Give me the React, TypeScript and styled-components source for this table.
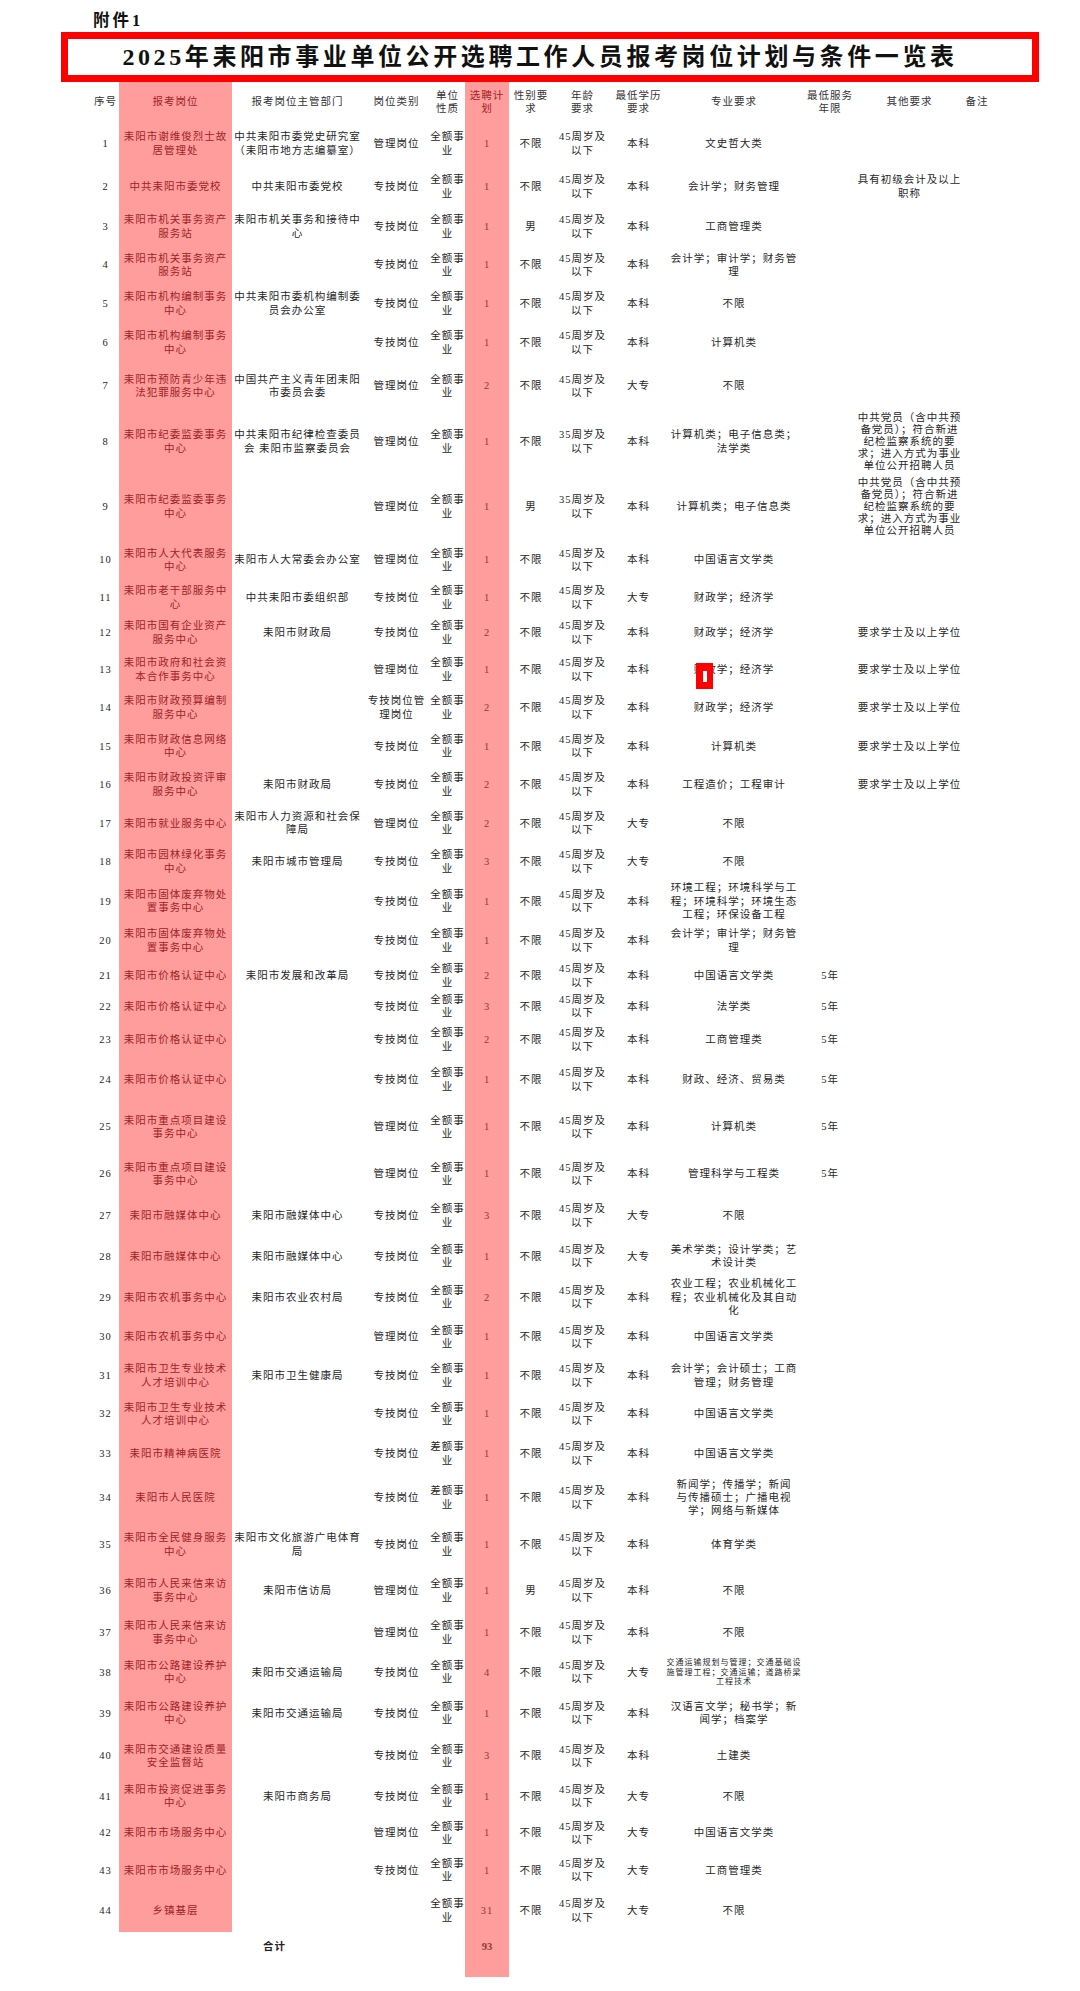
import React from "react";
import styled, { createGlobalStyle } from "styled-components";

const GlobalStyle = createGlobalStyle`
  html, body {
    margin: 0;
    padding: 0;
    background: #fff;
  }
  body {
    font-family: "Liberation Serif", "Noto Sans CJK SC", serif;
    color: #2a2a2a;
  }
`;

const COLS = "27px 113px 131px 67px 35px 44px 44px 59px 53px 138px 54px 105px 30px";

const Page = styled.div`
  width: 1080px;
  min-height: 1991px;
  background: #fff;
`;

const Attach = styled.div`
  height: 32px;
  box-sizing: border-box;
  padding: 11px 0 0 93px;
  font-size: 16.5px;
  font-weight: 700;
  line-height: 20px;
  letter-spacing: 3px;
  color: #111;
`;

const TitleBox = styled.div`
  margin-left: 61px;
  width: 978px;
  height: 50px;
  box-sizing: border-box;
  padding-right: 20px;
  border: 7px solid #ff0000;
  display: flex;
  align-items: center;
  justify-content: center;
`;

const Title = styled.h1`
  margin: 0;
  font-size: 24px;
  font-weight: 700;
  line-height: 1;
  letter-spacing: 3.6px;
  color: #111;
`;

const Table = styled.div`
  margin-left: 92px;
  width: 900px;
`;

const Row = styled.div<{ $h: number }>`
  display: grid;
  grid-template-columns: ${COLS};
  height: ${(p) => p.$h}px;
`;

const TotalRow = styled.div`
  display: grid;
  grid-template-columns: ${COLS};
  height: 45px;
  align-items: start;
`;

const Cell = styled.div<{
  $pink?: boolean;
  $num?: boolean;
  $small?: boolean;
  $head?: boolean;
  $tight?: boolean;
}>`
  position: relative;
  display: flex;
  align-items: center;
  justify-content: center;
  white-space: pre;
  text-align: center;
  font-size: ${(p) => (p.$small ? "8px" : "10.5px")};
  line-height: ${(p) => (p.$small ? "9.5px" : p.$tight ? "12px" : "13.3px")};
  letter-spacing: 1px;
  background: ${(p) => (p.$pink ? "#ff9c9c" : "transparent")};
  color: ${(p) => (p.$num ? "#8e3a3a" : p.$pink ? "#9e2426" : p.$head ? "#333" : "#262626")};
`;

const TotalLabel = styled.div`
  grid-column: 2 / 5;
  padding-top: 8px;
  text-align: center;
  font-size: 10.5px;
  line-height: 13.3px;
  letter-spacing: 1px;
  font-weight: 700;
  color: #222;
`;

const TotalCell = styled.div<{ $pink?: boolean }>`
  height: 45px;
  box-sizing: border-box;
  padding-top: 8px;
  text-align: center;
  font-size: 10.5px;
  line-height: 13.3px;
  font-weight: 700;
  color: #8e3a3a;
  background: ${(p) => (p.$pink ? "#ff9c9c" : "transparent")};
`;

const Marker = styled.span`
  position: absolute;
  left: 31px;
  top: 12px;
  width: 17px;
  height: 26px;
  background: #ff0000;
  &::after {
    content: "";
    position: absolute;
    left: 7px;
    top: 8px;
    width: 4px;
    height: 11px;
    background: #fff;
  }
`;

const Q = "全额事\n业";
const C = "差额事\n业";
const A45 = "45周岁及\n以下";
const A35 = "35周岁及\n以下";
const XS = "要求学士及以上学位";
const DJ = "中共党员（含中共预\n备党员）；符合新进\n纪检监察系统的要\n求；进入方式为事业\n单位公开招聘人员";

// post, dept, type, nature, count, gender, age, edu, major, years, other, height
type R = [string, string, string, string, string, string, string, string, string, string, string, number];

const rows: R[] = [
  ["耒阳市谢维俊烈士故\n居管理处", "中共耒阳市委党史研究室\n（耒阳市地方志编纂室）", "管理岗位", Q, "1", "不限", A45, "本科", "文史哲大类", "", "", 43.5],
  ["中共耒阳市委党校", "中共耒阳市委党校", "专技岗位", Q, "1", "不限", A45, "本科", "会计学；财务管理", "", "具有初级会计及以上\n职称", 42],
  ["耒阳市机关事务资产\n服务站", "耒阳市机关事务和接待中\n心", "专技岗位", Q, "1", "男", A45, "本科", "工商管理类", "", "", 38.5],
  ["耒阳市机关事务资产\n服务站", "", "专技岗位", Q, "1", "不限", A45, "本科", "会计学；审计学；财务管\n理", "", "", 38],
  ["耒阳市机构编制事务\n中心", "中共耒阳市委机构编制委\n员会办公室", "专技岗位", Q, "1", "不限", A45, "本科", "不限", "", "", 39],
  ["耒阳市机构编制事务\n中心", "", "专技岗位", Q, "1", "不限", A45, "本科", "计算机类", "", "", 39.5],
  ["耒阳市预防青少年违\n法犯罪服务中心", "中国共产主义青年团耒阳\n市委员会委", "管理岗位", Q, "2", "不限", A45, "大专", "不限", "", "", 47],
  ["耒阳市纪委监委事务\n中心", "中共耒阳市纪律检查委员\n会 耒阳市监察委员会", "管理岗位", Q, "1", "不限", A35, "本科", "计算机类；电子信息类；\n法学类", "", DJ, 64],
  ["耒阳市纪委监委事务\n中心", "", "管理岗位", Q, "1", "男", A35, "本科", "计算机类；电子信息类", "", DJ, 66],
  ["耒阳市人大代表服务\n中心", "耒阳市人大常委会办公室", "管理岗位", Q, "1", "不限", A45, "本科", "中国语言文学类", "", "", 41],
  ["耒阳市老干部服务中\n心", "中共耒阳市委组织部", "专技岗位", Q, "1", "不限", A45, "大专", "财政学；经济学", "", "", 34.5],
  ["耒阳市国有企业资产\n服务中心", "耒阳市财政局", "专技岗位", Q, "2", "不限", A45, "本科", "财政学；经济学", "", XS, 35.5],
  ["耒阳市政府和社会资\n本合作事务中心", "", "管理岗位", Q, "1", "不限", A45, "本科", "财政学；经济学", "", XS, 38],
  ["耒阳市财政预算编制\n服务中心", "", "专技岗位管\n理岗位", Q, "2", "不限", A45, "本科", "财政学；经济学", "", XS, 38.5],
  ["耒阳市财政信息网络\n中心", "", "专技岗位", Q, "1", "不限", A45, "本科", "计算机类", "", XS, 38.5],
  ["耒阳市财政投资评审\n服务中心", "耒阳市财政局", "专技岗位", Q, "2", "不限", A45, "本科", "工程造价；工程审计", "", XS, 38.5],
  ["耒阳市就业服务中心", "耒阳市人力资源和社会保\n障局", "管理岗位", Q, "2", "不限", A45, "大专", "不限", "", "", 38.5],
  ["耒阳市园林绿化事务\n中心", "耒阳市城市管理局", "专技岗位", Q, "3", "不限", A45, "大专", "不限", "", "", 38.5],
  ["耒阳市固体废弃物处\n置事务中心", "", "专技岗位", Q, "1", "不限", A45, "本科", "环境工程；环境科学与工\n程；环境科学；环境生态\n工程；环保设备工程", "", "", 40.5],
  ["耒阳市固体废弃物处\n置事务中心", "", "专技岗位", Q, "1", "不限", A45, "本科", "会计学；审计学；财务管\n理", "", "", 38.5],
  ["耒阳市价格认证中心", "耒阳市发展和改革局", "专技岗位", Q, "2", "不限", A45, "本科", "中国语言文学类", "5年", "", 31],
  ["耒阳市价格认证中心", "", "专技岗位", Q, "3", "不限", A45, "本科", "法学类", "5年", "", 30.5],
  ["耒阳市价格认证中心", "", "专技岗位", Q, "2", "不限", A45, "本科", "工商管理类", "5年", "", 36],
  ["耒阳市价格认证中心", "", "专技岗位", Q, "1", "不限", A45, "本科", "财政、经济、贸易类", "5年", "", 44.5],
  ["耒阳市重点项目建设\n事务中心", "", "管理岗位", Q, "1", "不限", A45, "本科", "计算机类", "5年", "", 50],
  ["耒阳市重点项目建设\n事务中心", "", "管理岗位", Q, "1", "不限", A45, "本科", "管理科学与工程类", "5年", "", 44],
  ["耒阳市融媒体中心", "耒阳市融媒体中心", "专技岗位", Q, "3", "不限", A45, "大专", "不限", "", "", 39.5],
  ["耒阳市融媒体中心", "耒阳市融媒体中心", "专技岗位", Q, "1", "不限", A45, "大专", "美术学类；设计学类；艺\n术设计类", "", "", 41.5],
  ["耒阳市农机事务中心", "耒阳市农业农村局", "专技岗位", Q, "2", "不限", A45, "本科", "农业工程；农业机械化工\n程；农业机械化及其自动\n化", "", "", 40.5],
  ["耒阳市农机事务中心", "", "管理岗位", Q, "1", "不限", A45, "本科", "中国语言文学类", "", "", 39],
  ["耒阳市卫生专业技术\n人才培训中心", "耒阳市卫生健康局", "专技岗位", Q, "1", "不限", A45, "本科", "会计学；会计硕士；工商\n管理；财务管理", "", "", 38.5],
  ["耒阳市卫生专业技术\n人才培训中心", "", "专技岗位", Q, "1", "不限", A45, "本科", "中国语言文学类", "", "", 38],
  ["耒阳市精神病医院", "", "专技岗位", C, "1", "不限", A45, "本科", "中国语言文学类", "", "", 41.5],
  ["耒阳市人民医院", "", "专技岗位", C, "1", "不限", A45, "本科", "新闻学；传播学；新闻\n与传播硕士；广播电视\n学；网络与新媒体", "", "", 46.5],
  ["耒阳市全民健身服务\n中心", "耒阳市文化旅游广电体育\n局", "专技岗位", Q, "1", "不限", A45, "本科", "体育学类", "", "", 47.5],
  ["耒阳市人民来信来访\n事务中心", "耒阳市信访局", "管理岗位", Q, "1", "男", A45, "本科", "不限", "", "", 44],
  ["耒阳市人民来信来访\n事务中心", "", "管理岗位", Q, "1", "不限", A45, "本科", "不限", "", "", 40],
  ["耒阳市公路建设养护\n中心", "耒阳市交通运输局", "专技岗位", Q, "4", "不限", A45, "大专", "交通运输规划与管理；交通基础设\n施管理工程；交通运输；道路桥梁\n工程技术", "", "", 39.5],
  ["耒阳市公路建设养护\n中心", "耒阳市交通运输局", "专技岗位", Q, "1", "不限", A45, "本科", "汉语言文学；秘书学；新\n闻学；档案学", "", "", 42.5],
  ["耒阳市交通建设质量\n安全监督站", "", "专技岗位", Q, "3", "不限", A45, "本科", "土建类", "", "", 43],
  ["耒阳市投资促进事务\n中心", "耒阳市商务局", "专技岗位", Q, "1", "不限", A45, "大专", "不限", "", "", 37.5],
  ["耒阳市市场服务中心", "", "管理岗位", Q, "1", "不限", A45, "大专", "中国语言文学类", "", "", 36],
  ["耒阳市市场服务中心", "", "专技岗位", Q, "1", "不限", A45, "大专", "工商管理类", "", "", 38.5],
  ["乡镇基层", "", "", Q, "31", "不限", A45, "大专", "不限", "", "", 42.5],
];

const heads = [
  "序号",
  "报考岗位",
  "报考岗位主管部门",
  "岗位类别",
  "单位\n性质",
  "选聘计\n划",
  "性别要\n求",
  "年龄\n要求",
  "最低学历\n要求",
  "专业要求",
  "最低服务\n年限",
  "其他要求",
  "备注",
];

export default function App() {
  return (
    <Page>
      <GlobalStyle />
      <Attach>附件1</Attach>
      <TitleBox>
        <Title>2025年耒阳市事业单位公开选聘工作人员报考岗位计划与条件一览表</Title>
      </TitleBox>

      <Table>
        <Row $h={40}>
          {heads.map((h, i) => (
            <Cell key={`h-${i}`} $head $pink={i === 1 || i === 5}>
              {h}
            </Cell>
          ))}
        </Row>

        {rows.map((r, index) => {
          const [post, dept, type, nature, count, gender, age, edu, major, years, other, h] = r;
          const no = index + 1;
          return (
            <Row $h={h} key={`row-${no}`}>
              <Cell>{no}</Cell>
              <Cell $pink>{post}</Cell>
              <Cell>{dept}</Cell>
              <Cell>{type}</Cell>
              <Cell>{nature}</Cell>
              <Cell $pink $num>{count}</Cell>
              <Cell>{gender}</Cell>
              <Cell>{age}</Cell>
              <Cell>{edu}</Cell>
              <Cell $small={no === 38}>
                {major}
                {no === 13 && <Marker />}
              </Cell>
              <Cell>{years}</Cell>
              <Cell $tight={other === DJ}>{other}</Cell>
              <Cell></Cell>
            </Row>
          );
        })}

        <TotalRow>
          <TotalLabel>合计</TotalLabel>
          <TotalCell />
          <TotalCell $pink>93</TotalCell>
        </TotalRow>
      </Table>
    </Page>
  );
}
